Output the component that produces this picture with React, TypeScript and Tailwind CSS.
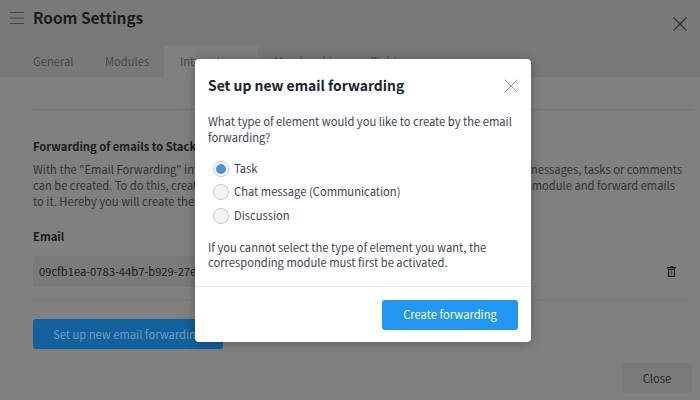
import React from "react";
import { X } from "lucide-react";

const font = "font-['Noto_Sans_CJK_SC','Noto_Sans',sans-serif]";

const options = [
  { label: "Task", checked: true },
  { label: "Chat message (Communication)", checked: false },
  { label: "Discussion", checked: false },
];

const TrashIcon = () => (
  <svg viewBox="0 0 10 12" className="w-[9px] h-[11px] text-[#1c1c1c]" fill="currentColor">
    <path d="M3.5 0h3v1H10v1.4H0V1h3.5z" />
    <path d="M1 3h8v9H1zm1.4 1.2v6.6h5.2V4.2z" fillRule="evenodd" />
    <path d="M4.2 4.5h1.6v6H4.2z" opacity="0.5" />
  </svg>
);

const ForwardingModal: React.FC = () => (
  <div className="absolute left-[195px] top-[59px] w-[336px] h-[283px] bg-white rounded-[4px] shadow-[0_1px_12px_rgba(0,0,0,0.3)] flex flex-col">
    <div className="flex items-center justify-between pl-[13px] pr-[8px] h-[52px] pt-[2px]">
      <h2 className="text-[13.9px] leading-[24px] font-bold text-[#1b2330] -mt-[2px]">Set up new email forwarding</h2>
      <X className="w-[24px] h-[24px] text-[#999]" strokeWidth={1} />
    </div>
    <div className="px-[13px] pt-[3px] text-[11.2px] leading-[15.5px] text-[#3c4658] flex-1">
      <p>What type of element would you like to create by the email forwarding?</p>
      <div className="mt-[15.5px] flex flex-col gap-[7.5px] pl-[5px]">
        {options.map((o) => (
          <div key={o.label} className="flex items-center gap-[5px] h-[16px]">
            {o.checked ? (
              <span className="w-[16px] h-[16px] rounded-full border border-[#c9c9c9] bg-white flex items-center justify-center">
                <span className="w-[10px] h-[10px] rounded-full bg-[#4a90e2]" />
              </span>
            ) : (
              <span className="w-[16px] h-[16px] rounded-full border border-[#c9c9c9] bg-[#f4f4f4]" />
            )}
            <span>{o.label}</span>
          </div>
        ))}
      </div>
      <p className="mt-[16px]">If you cannot select the type of element you want, the corresponding module must first be activated.</p>
    </div>
    <div className="h-[56px] border-t border-[#e9e9e9] flex items-center justify-end pr-[13px]">
      <button className="w-[136px] h-[30px] rounded-[3px] bg-[#2196f3] text-white text-[11.2px]">Create forwarding</button>
    </div>
  </div>
);

export default function App() {
  return (
    <div className={`relative w-[700px] h-[400px] overflow-hidden bg-[#808080] text-[11.2px] ${font}`}>
      <header className="h-[77px] bg-[#797979] relative">
        <div className="flex items-center h-[36px] pl-[10px] text-[#1c1c1c]">
          <svg viewBox="0 0 14 14" className="w-[14px] h-[14px] text-[#444]" fill="none" stroke="currentColor" strokeWidth="1">
            <path d="M0 1.5h14M0 7h14M0 12.5h14" />
          </svg>
          <h1 className="ml-[9px] text-[15.4px] font-bold">Room Settings</h1>
          <X className="ml-auto mr-[8px] mt-[11px] w-[24px] h-[24px] text-[#2c2c2c]" strokeWidth={1.1} />
        </div>
        <nav className="absolute left-[17px] top-[46px] h-[31px] flex text-[#4a4a4a] leading-[31px]">
          <span className="px-[16px] w-[72px]">General</span>
          <span className="px-[16px] w-[75px]">Modules</span>
          <span className="px-[16px] w-[94px] bg-[#808080]">Integrations</span>
          <span className="px-[16px] w-[96px] whitespace-nowrap">Membership</span>
          <span className="px-[16px]">Rights</span>
        </nav>
      </header>
      <main className="px-[33px] pr-[8px] text-[#2a2a2a]">
        <div className="mt-[32px] border-t border-[#757575]" />
        <h3 className="mt-[28px] font-bold text-[#1a1a1a] leading-[16px]">Forwarding of emails to Stackfield</h3>
        <p className="mt-[7px] leading-[16px] text-[#333]">
          With the "Email Forwarding" integration you can have the emails sent to Stackfield so that chat messages, tasks or comments
          <br />
          can be created. To do this, create a new email forwarding address here first, then simply select a module and forward emails
          <br />
          to it. Hereby you will create the element automatically.
        </p>
        <div className="mt-[19px] font-bold leading-[16px] text-[#1a1a1a]">Email</div>
        <div className="mt-[12px] h-[31px] flex items-center justify-between">
          <div className="w-[400px] h-[31px] rounded-[3px] bg-[#7a7a7a] pl-[6px] leading-[31px] text-[#1c1c1c]">09cfb1ea-0783-44b7-b929-27e</div>
          <div className="mr-[16px] -mt-[1px]"><TrashIcon /></div>
        </div>
        <div className="mt-[12px] border-t border-[#7a7a7a]" />
        <button className="mt-[19px] w-[190px] h-[30px] rounded-[3px] bg-[#11619c] text-[#6f9dc0] text-left pl-[20px]">Set up new email forwarding</button>
        <div className="flex justify-end">
          <button className="mt-[14px] w-[70px] h-[30px] rounded-[2px] bg-[#7a7a7a] text-[#2a2a2a]">Close</button>
        </div>
      </main>
      <ForwardingModal />
    </div>
  );
}
